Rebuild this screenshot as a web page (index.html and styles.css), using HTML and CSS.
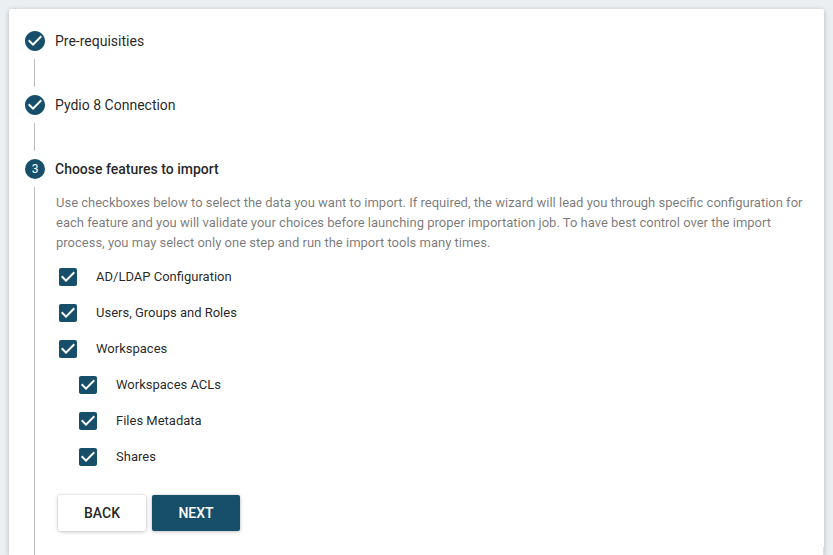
FILE: index.html
```html
<!DOCTYPE html>
<html lang="en">
<head>
<meta charset="utf-8">
<title>Import wizard</title>
<link rel="stylesheet" href="styles.css">
</head>
<body>
<svg class="defs" width="0" height="0">
<symbol id="done" viewBox="0 0 24 24"><path d="M12 2C6.48 2 2 6.48 2 12s4.480 10 10 10 10-4.480 10-10S17.520 2 12 2zm-2 15l-5-5 1.410-1.410L10 14.170l7.590-7.590L19 8l-9 9z"/></symbol>
<symbol id="box" viewBox="0 0 24 24"><path d="M19 3H5c-1.110 0-2 .9-2 2v14c0 1.100.89 2 2 2h14c1.110 0 2-.9 2-2V5c0-1.100-.89-2-2-2zm-9 14l-5-5 1.410-1.410L10 14.170l7.590-7.590L19 8l-9 9z"/></symbol>
</svg>
<main class="paper">
<div class="step"><svg class="icon"><use href="#done"/></svg><span>Pre-requisities</span></div>
<div class="connector"></div>
<div class="step"><svg class="icon"><use href="#done"/></svg><span>Pydio 8 Connection</span></div>
<div class="connector"></div>
<div class="step active"><svg class="icon" viewBox="0 0 24 24"><circle cx="12" cy="12" r="10"/><text x="12" y="16" text-anchor="middle">3</text></svg><span>Choose features to import</span></div>
<section class="content">
<p>Use checkboxes below to select the data you want to import. If required, the wizard will lead you through specific configuration for<br>each feature and you will validate your choices before launching proper importation job. To have best control over the import<br>process, you may select only one step and run the import tools many times.</p>
<div class="option"><svg class="icon"><use href="#box"/></svg><span>AD/LDAP Configuration</span></div>
<div class="option"><svg class="icon"><use href="#box"/></svg><span>Users, Groups and Roles</span></div>
<div class="option"><svg class="icon"><use href="#box"/></svg><span>Workspaces</span></div>
<div class="option sub"><svg class="icon"><use href="#box"/></svg><span>Workspaces ACLs</span></div>
<div class="option sub"><svg class="icon"><use href="#box"/></svg><span>Files Metadata</span></div>
<div class="option sub"><svg class="icon"><use href="#box"/></svg><span>Shares</span></div>
<div class="actions"><button>BACK</button><button class="primary">NEXT</button></div>
</section>
<div class="edge"></div>
</main>
</body>
</html>
```
FILE: styles.css
```css
* { box-sizing: border-box; }
body { margin: 0; height: 555px; overflow: hidden; background: #eceff1; font-family: Roboto, sans-serif; color: rgba(0,0,0,.87); }
.defs { display: block; height: 0; }
.paper { position: relative; display: flex; flex-direction: column; margin: 9px 9px 0; height: 546px; padding-top: 20px; background: #fff; border-radius: 2px 2px 0 0; box-shadow: 0 1px 6px rgba(0,0,0,.12), 0 1px 4px rgba(0,0,0,.12); }
.icon { display: block; width: 24px; height: 24px; flex: none; fill: #174f6b; }
.icon text { fill: #fff; font-size: 12px; font-weight: 400; }
.step { display: flex; align-items: center; flex: none; height: 24px; padding-left: 14px; gap: 8px; font-size: 14px; white-space: nowrap; }
.active { font-weight: 500; }
.connector { flex: none; width: 1px; height: 28px; margin: 6px 0 6px 25px; background: #bdbdbd; }
.content { flex: 1; margin: 6px 0 0 25px; padding: 6px 0 0 21px; border-left: 1px solid #bdbdbd; }
.content p { margin: 0 0 12px; font-size: 13px; line-height: 20px; color: rgba(0,0,0,.54); white-space: nowrap; }
.option { display: flex; align-items: center; height: 24px; margin-bottom: 12px; gap: 16px; font-size: 13px; }
.option span { line-height: 16px; }
.sub { margin-left: 20px; }
.actions { display: flex; gap: 6px; margin: 26px 0 0 2px; }
button { width: 88px; height: 36px; padding: 0; border: 0; border-radius: 2px; background: #fff; color: rgba(0,0,0,.87); font: 500 14px Roboto, sans-serif; box-shadow: 0 1px 4px rgba(0,0,0,.2), 0 0 2px rgba(0,0,0,.15); }
.primary { background: #174f6b; color: #fff; }
/* sliver of the scroll track at the paper's lower right edge */
.edge { position: absolute; right: 0; bottom: 0; width: 1px; height: 8px; background: #e0e0e0; }
```
